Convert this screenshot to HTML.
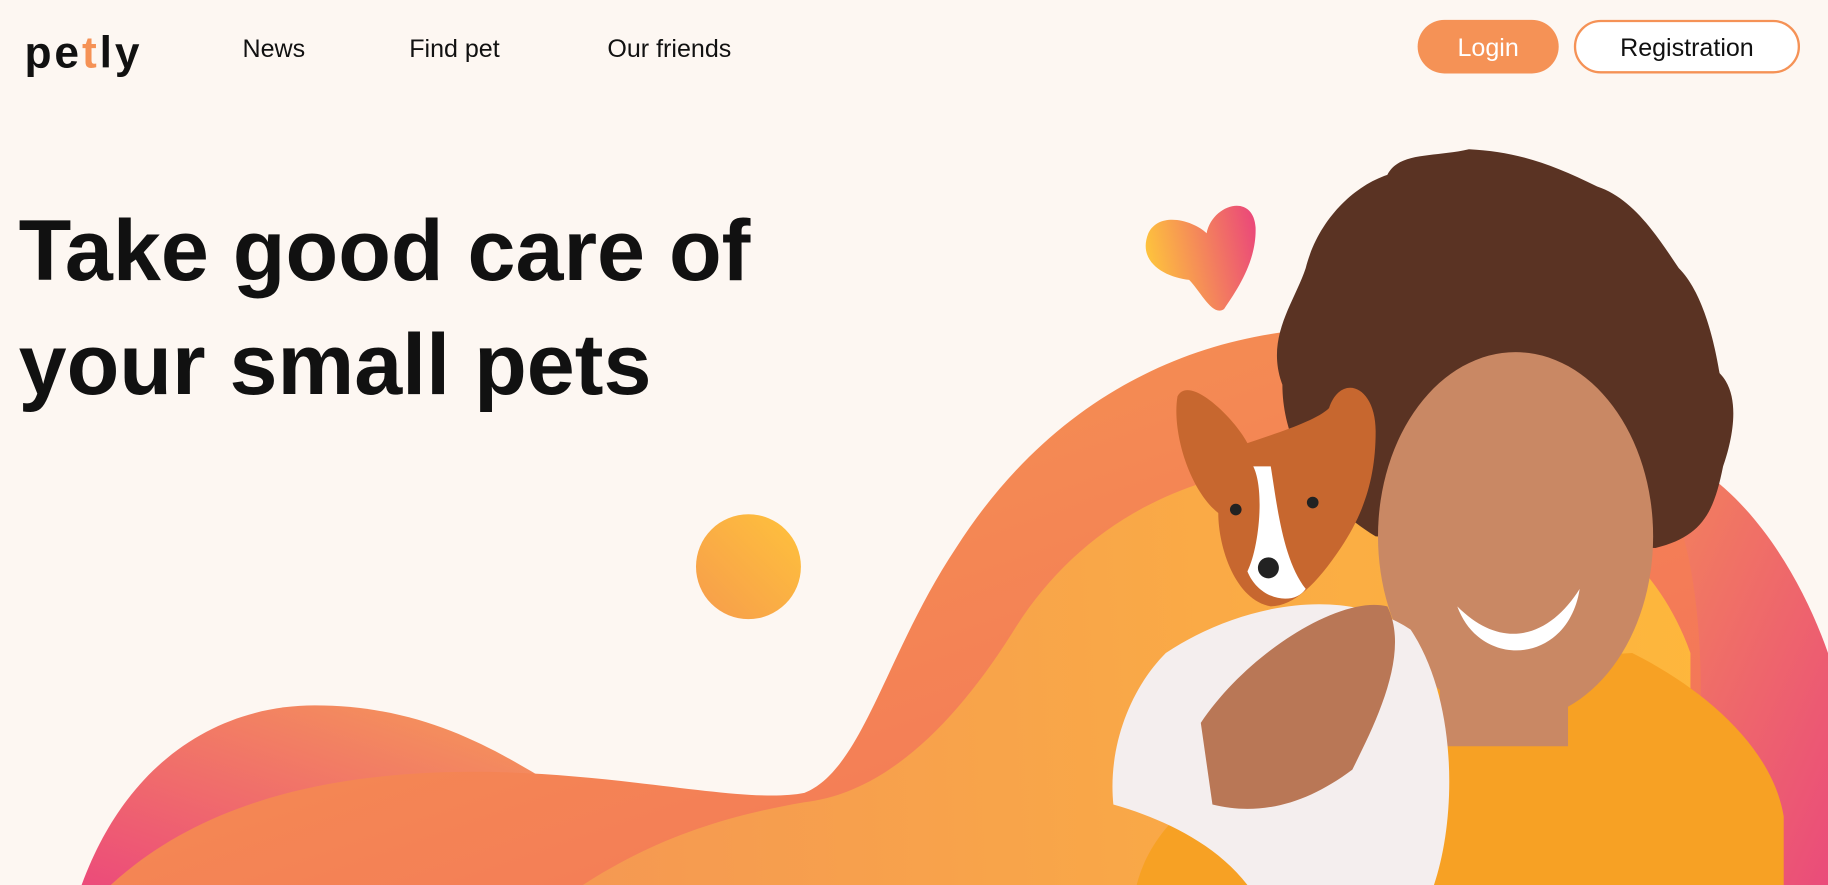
<!DOCTYPE html>
<html><head><meta charset="utf-8"><style>
html,body{margin:0;padding:0;background:#FDF7F2;overflow:hidden}
svg{display:block}
</style></head><body>
<svg width="1828" height="885" viewBox="0 0 1568 759" preserveAspectRatio="none" xmlns="http://www.w3.org/2000/svg">
<defs>
<linearGradient id="pk" x1="0" y1="1" x2="1" y2="0"><stop offset="0" stop-color="#EC4B7A"/><stop offset="1" stop-color="#F6A055"/></linearGradient>
<linearGradient id="og" x1="0" y1="0" x2="1" y2="1"><stop offset="0" stop-color="#F59A4F"/><stop offset="1" stop-color="#F3705A"/></linearGradient>
<linearGradient id="yl" x1="0" y1="0" x2="1" y2="0"><stop offset="0" stop-color="#F59A52"/><stop offset="1" stop-color="#FEBA3B"/></linearGradient>
<linearGradient id="pr" x1="0" y1="0" x2="1" y2="1"><stop offset="0" stop-color="#F48A58"/><stop offset="1" stop-color="#EA4C7A"/></linearGradient>
<linearGradient id="ci" x1="0" y1="1" x2="1" y2="0"><stop offset="0" stop-color="#F69C4C"/><stop offset="1" stop-color="#FFC23C"/></linearGradient>
<linearGradient id="ht" x1="0" y1="0.5" x2="1" y2="0.3"><stop offset="0" stop-color="#FEC53C"/><stop offset="1" stop-color="#EB4B78"/></linearGradient>
</defs>
<rect width="1568" height="759" fill="#FDF7F2"/>
<path d="M70 759 C110 650 190 605 270 605 C360 605 420 640 470 670 L520 759 Z" fill="url(#pk)"/>
<path d="M1400 380 C1480 390 1540 480 1568 560 L1568 759 L1440 759 Z" fill="url(#pr)"/>
<path d="M95 759 C170 690 280 660 420 662 C540 664 640 690 690 680 C740 660 760 560 820 470 C890 360 990 300 1100 285 C1250 270 1380 320 1430 420 C1470 510 1460 640 1450 759 Z" fill="url(#og)"/>
<path d="M500 759 C560 720 620 700 690 688 C760 680 820 620 870 540 C920 460 1000 410 1100 400 C1250 390 1400 420 1450 560 L1450 759 Z" fill="url(#yl)" opacity="0.95"/>
<circle cx="642" cy="486" r="45" fill="url(#ci)"/>
<path d="M985 200 C995 180 1025 190 1035 200 C1040 175 1075 165 1077 195 C1078 225 1060 250 1050 265 C1040 272 1030 250 1020 240 C1000 238 975 225 985 200 Z" fill="url(#ht)"/>
<path d="M975 759 C990 700 1050 660 1120 640 C1180 610 1220 580 1240 570 L1400 560 C1460 590 1520 640 1530 700 L1530 759 Z" fill="#F7A124"/>
<path d="M1100 330 C1085 290 1110 260 1120 230 C1130 190 1160 160 1190 150 C1200 130 1230 135 1260 128 C1300 130 1330 140 1370 160 C1400 170 1420 200 1440 230 C1460 250 1470 290 1475 320 C1495 340 1485 380 1478 400 C1470 440 1460 460 1420 470 L1180 460 C1130 430 1100 380 1100 330 Z" fill="#5A3323"/>
<ellipse cx="1300" cy="460" rx="118" ry="158" fill="#C98864"/>
<path d="M1250 520 C1290 560 1330 545 1355 505 C1345 570 1270 575 1250 520 Z" fill="#fff"/>
<rect x="1235" y="580" width="110" height="60" fill="#C98864"/>
<path d="M1000 560 C1060 520 1150 500 1210 540 C1250 600 1250 700 1230 759 L1070 759 C1040 720 990 700 955 690 C950 640 970 590 1000 560 Z" fill="#F4EEEE"/>
<path d="M1030 620 C1070 560 1150 510 1190 520 C1210 560 1180 620 1160 660 C1120 690 1080 700 1040 690 Z" fill="#B97756"/>
<path d="M1010 340 C1020 320 1060 360 1070 380 C1100 370 1130 360 1140 350 C1150 320 1180 330 1180 370 C1180 410 1170 440 1150 470 C1130 500 1110 520 1090 520 C1060 515 1045 470 1045 440 C1020 420 1005 370 1010 340 Z" fill="#C7672F"/>
<path d="M1075 400 C1085 420 1080 470 1070 490 C1080 515 1110 520 1120 505 C1100 480 1095 430 1090 400 Z" fill="#fff"/>
<circle cx="1088" cy="487" r="9" fill="#222"/>
<circle cx="1060" cy="437" r="5" fill="#222"/><circle cx="1126" cy="431" r="5" fill="#222"/>
<text x="21" y="58" font-family="Liberation Sans, sans-serif" font-weight="bold" font-size="38" fill="#111" letter-spacing="2.5">pe<tspan fill="#F59256">t</tspan>ly</text>
<g font-family="Liberation Sans, sans-serif" font-size="21.5" fill="#111">
<text x="208" y="49">News</text>
<text x="351" y="49">Find pet</text>
<text x="521" y="49">Our friends</text>
</g>
<rect x="1216" y="17" width="121" height="46" rx="23" fill="#F59256"/>
<text x="1276.5" y="48" text-anchor="middle" font-family="Liberation Sans, sans-serif" font-size="21.5" fill="#fff">Login</text>
<rect x="1351" y="18" width="192" height="44" rx="22" fill="#fff" stroke="#F59256" stroke-width="2"/>
<text x="1447" y="48" text-anchor="middle" font-family="Liberation Sans, sans-serif" font-size="21.5" fill="#111">Registration</text>
<g font-family="Liberation Sans, sans-serif" font-weight="bold" font-size="74" fill="#111">
<text x="16" y="240">Take good care of</text>
<text x="16" y="338">your small pets</text>
</g>
</svg>
</body></html>
